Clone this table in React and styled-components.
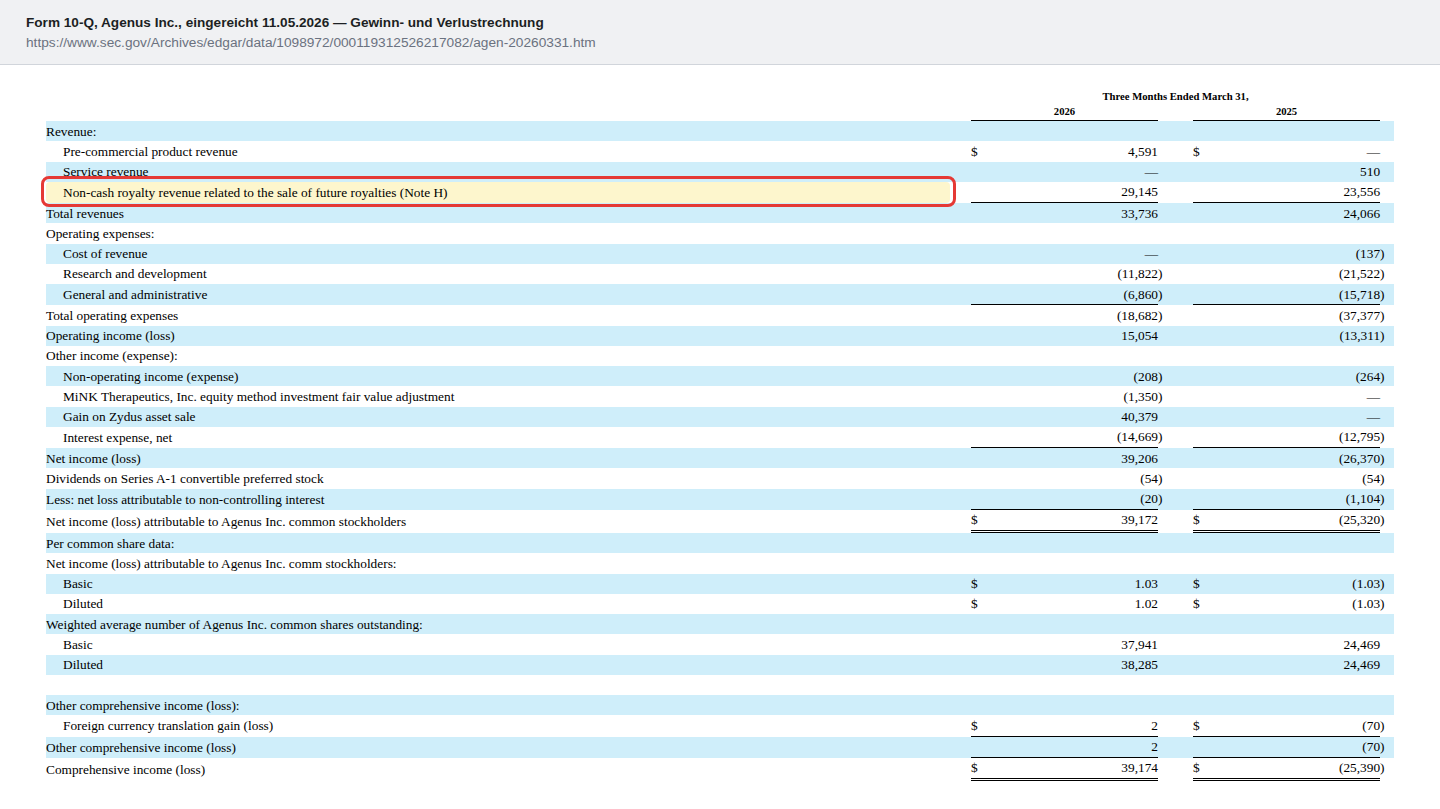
import React from 'react';
import styled, { createGlobalStyle, css } from 'styled-components';

const GlobalStyle = createGlobalStyle`
  html, body {
    margin: 0;
    padding: 0;
    background: #ffffff;
  }
  body {
    font-family: 'Liberation Serif', 'Times New Roman', serif;
    color: #000;
  }
`;

const Page = styled.div`
  min-height: 809px;
  background: #ffffff;
`;

const TopBar = styled.header`
  height: 49px;
  padding: 15px 26px 0;
  background: #f0f1f3;
  border-bottom: 1px solid #d1d5db;
  font-family: 'Liberation Sans', Arial, sans-serif;
`;

const Title = styled.div`
  font-size: 13.6px;
  font-weight: 700;
  line-height: 16px;
  color: #1c1f23;
`;

const Url = styled.div`
  margin-top: 4px;
  font-size: 13.7px;
  line-height: 16px;
  color: #6b7280;
`;

const Main = styled.main`
  padding: 23px 46px 0;
`;

const Table = styled.table`
  width: 1348px;
  table-layout: fixed;
  border-collapse: separate;
  border-spacing: 0;
`;

const HeadCell = styled.th`
  padding: ${p => (p.$year ? '1px 0 3px' : '2px 0')};
  font-size: 10.67px;
  font-weight: 700;
  line-height: 12px;
  text-align: center;
  border-bottom: ${p => (p.$year ? '1px solid #000' : 'none')};
`;

const Row = styled.tr`
  &:nth-child(odd) {
    background: #cfeefa;
  }
`;

// underline under the amount columns; $clear keeps the same width but hides it
const ruleStyle = css`
  border-bottom: ${p =>
    p.$rule === 'double'
      ? `3px double ${p.$clear ? 'transparent' : '#000'}`
      : p.$rule === 'single'
      ? `1px solid ${p.$clear ? 'transparent' : '#000'}`
      : 'none'};
`;

const Cell = styled.td`
  padding: 0;
  height: 20.25px;
  font-size: 13.33px;
  line-height: 15px;
  vertical-align: middle;
  white-space: nowrap;
`;

const LabelCell = styled(Cell)`
  position: relative;
  padding-left: ${p => (p.$indent ? '17px' : '0')};
  ${p =>
    p.$highlight &&
    css`
      background: #fdf6cd;
      border-radius: 4px;
      &::after {
        content: '';
        position: absolute;
        top: -6px;
        bottom: -4px;
        left: -5px;
        right: -6px;
        border: 3px solid #e53935;
        border-radius: 8px;
        pointer-events: none;
      }
    `}
`;

const DollarCell = styled(Cell)`
  text-align: left;
  ${ruleStyle}
`;

const AmountCell = styled(Cell)`
  text-align: right;
  ${ruleStyle}
`;

const ParenCell = styled(Cell)`
  text-align: left;
  ${ruleStyle}
`;

const rows = [
  { label: 'Revenue:' },
  { label: 'Pre-commercial product revenue', indent: true, cur: true, a: '4,591', b: '—' },
  { label: 'Service revenue', indent: true, a: '—', b: '510' },
  {
    label: 'Non-cash royalty revenue related to the sale of future royalties (Note H)',
    indent: true,
    a: '29,145',
    b: '23,556',
    rule: 'single',
    highlight: true,
  },
  { label: 'Total revenues', a: '33,736', b: '24,066' },
  { label: 'Operating expenses:' },
  { label: 'Cost of revenue', indent: true, a: '—', b: '(137)' },
  { label: 'Research and development', indent: true, a: '(11,822)', b: '(21,522)' },
  { label: 'General and administrative', indent: true, a: '(6,860)', b: '(15,718)', rule: 'single' },
  { label: 'Total operating expenses', a: '(18,682)', b: '(37,377)' },
  { label: 'Operating income (loss)', a: '15,054', b: '(13,311)' },
  { label: 'Other income (expense):' },
  { label: 'Non-operating income (expense)', indent: true, a: '(208)', b: '(264)' },
  {
    label: 'MiNK Therapeutics, Inc. equity method investment fair value adjustment',
    indent: true,
    a: '(1,350)',
    b: '—',
  },
  { label: 'Gain on Zydus asset sale', indent: true, a: '40,379', b: '—' },
  { label: 'Interest expense, net', indent: true, a: '(14,669)', b: '(12,795)', rule: 'single' },
  { label: 'Net income (loss)', a: '39,206', b: '(26,370)' },
  { label: 'Dividends on Series A-1 convertible preferred stock', a: '(54)', b: '(54)' },
  { label: 'Less: net loss attributable to non-controlling interest', a: '(20)', b: '(1,104)', rule: 'single' },
  {
    label: 'Net income (loss) attributable to Agenus Inc. common stockholders',
    cur: true,
    a: '39,172',
    b: '(25,320)',
    rule: 'double',
  },
  { label: 'Per common share data:' },
  { label: 'Net income (loss) attributable to Agenus Inc. comm stockholders:' },
  { label: 'Basic', indent: true, cur: true, a: '1.03', b: '(1.03)' },
  { label: 'Diluted', indent: true, cur: true, a: '1.02', b: '(1.03)' },
  { label: 'Weighted average number of Agenus Inc. common shares outstanding:' },
  { label: 'Basic', indent: true, a: '37,941', b: '24,469' },
  { label: 'Diluted', indent: true, a: '38,285', b: '24,469' },
  { label: '' },
  { label: 'Other comprehensive income (loss):' },
  { label: 'Foreign currency translation gain (loss)', indent: true, cur: true, a: '2', b: '(70)', rule: 'single' },
  { label: 'Other comprehensive income (loss)', a: '2', b: '(70)', rule: 'single' },
  { label: 'Comprehensive income (loss)', cur: true, a: '39,174', b: '(25,390)', rule: 'double' },
];

// split "(1,234)" so the closing paren hangs in its own narrow column
const splitParen = (value) => {
  if (!value) return ['', ''];
  if (value.endsWith(')')) return [value.slice(0, -1), ')'];
  return [value, ''];
};

function AmountGroup({ row, value }) {
  const [num, paren] = splitParen(value);
  return (
    <>
      <DollarCell $rule={row.rule}>{row.cur ? '$' : ''}</DollarCell>
      <AmountCell $rule={row.rule}>{num}</AmountCell>
      <ParenCell $rule={row.rule} $clear>{paren}</ParenCell>
    </>
  );
}

export default function App() {
  return (
    <Page>
      <GlobalStyle />
      <TopBar>
        <Title>Form 10-Q, Agenus Inc., eingereicht 11.05.2026 — Gewinn- und Verlustrechnung</Title>
        <Url>https://www.sec.gov/Archives/edgar/data/1098972/000119312526217082/agen-20260331.htm</Url>
      </TopBar>
      <Main>
        <Table>
          <colgroup>
            <col style={{ width: 904 }} />
            <col style={{ width: 21 }} />
            <col style={{ width: 14 }} />
            <col style={{ width: 173 }} />
            <col style={{ width: 8 }} />
            <col style={{ width: 27 }} />
            <col style={{ width: 14 }} />
            <col style={{ width: 173 }} />
            <col style={{ width: 14 }} />
          </colgroup>
          <thead>
            <tr>
              <HeadCell />
              <HeadCell />
              <HeadCell colSpan={6}>Three Months Ended March 31,</HeadCell>
              <HeadCell />
            </tr>
            <tr>
              <HeadCell />
              <HeadCell />
              <HeadCell colSpan={2} $year>2026</HeadCell>
              <HeadCell />
              <HeadCell />
              <HeadCell colSpan={2} $year>2025</HeadCell>
              <HeadCell />
            </tr>
          </thead>
          <tbody>
            {rows.map((row, i) => (
              <Row key={i}>
                <LabelCell $indent={row.indent} $highlight={row.highlight}>
                  {row.label}
                </LabelCell>
                <Cell />
                <AmountGroup row={row} value={row.a} />
                <Cell />
                <AmountGroup row={row} value={row.b} />
              </Row>
            ))}
          </tbody>
        </Table>
      </Main>
    </Page>
  );
}
